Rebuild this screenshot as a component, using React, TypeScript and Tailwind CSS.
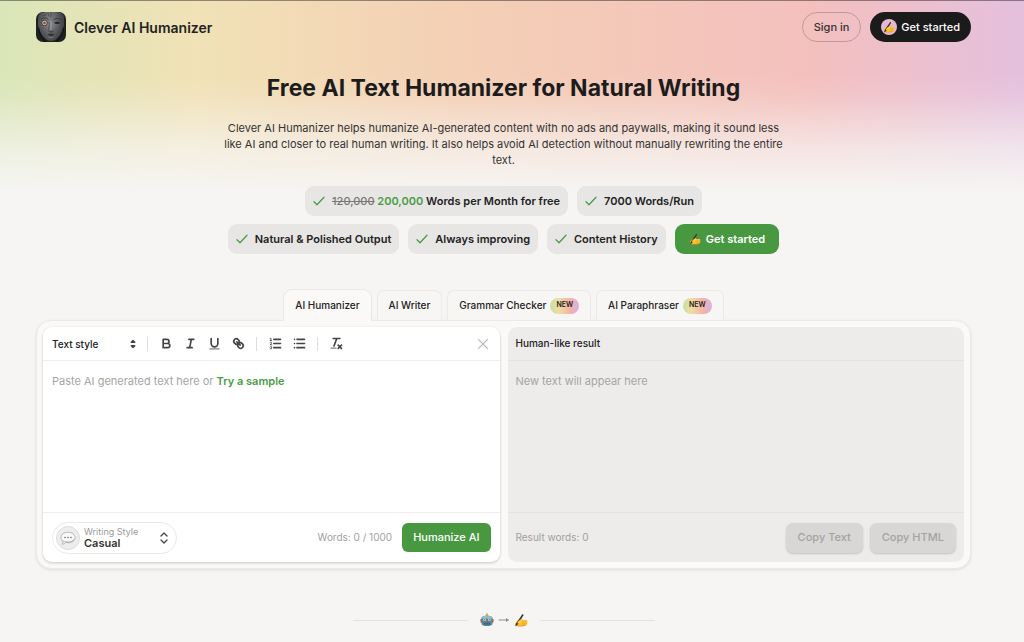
import React, { useState } from 'react';

interface IconProps {
  className?: string;
}

const WritingHand: React.FC<IconProps> = ({ className }) => (
  <svg viewBox="0 0 32 32" className={className} aria-hidden="true">
    <path d="M2.500 25c1.500-5 6-9.500 12-11.500 3-.8 5 .2 4.500 2.500h9c3 0 3.200 3.300.8 3.800 2.800.4 2.700 3.400.4 3.800 1.600 1 .9 3-1 3.200-.2 1.400-1.400 1.900-3 2.200-6.200 1.400-14 1.600-20 .3C3 28.700 2 27.500 2.500 25z" fill="#fdbf30" />
    <path d="M18 19.800h11M19 23.500h10M18 26.800h9" stroke="#e6981f" strokeWidth="0.900" fill="none" />
    <path d="M4 28.600c6 2 17 1.800 23-.8" stroke="#d9851c" strokeWidth="1.300" fill="none" />
    <path d="M2.500 30.500 5 23.500 18.500 3.500c1.200-1.500 4 .2 3 2.100L8 27z" fill="#3a3836" />
    <path d="M7.500 22.500c2.500-4 5.500-6.700 9-8 2.300-.6 3.200.6 2.500 2.200-1.500 3.700-5 6.300-10.500 7.500z" fill="#fecd45" />
  </svg>
);

const Robot: React.FC<IconProps> = ({ className }) => (
  <svg viewBox="0 0 32 32" className={className} aria-hidden="true">
    <circle cx="16" cy="3" r="2.500" fill="#f5a524" />
    <path d="M11.500 8c0-4 9-4 9 0z" fill="#e59b33" />
    <rect x="1" y="13" width="4" height="9" rx="2" fill="#c9544e" />
    <rect x="27" y="13" width="4" height="9" rx="2" fill="#c9544e" />
    <path d="M3.500 10c2-5 23-5 25 0v15c-1 6.500-24 6.500-25 0z" fill="#4f8c9e" />
    <path d="M4 10c2-4.500 22-4.500 24 0l-.5 2.500h-23z" fill="#8fc0cd" />
    <circle cx="10.500" cy="15.500" r="3" fill="#dfeaed" />
    <circle cx="21.500" cy="15.500" r="3" fill="#dfeaed" />
    <circle cx="10.500" cy="15.500" r="1.600" fill="#c2463e" />
    <circle cx="21.500" cy="15.500" r="1.600" fill="#c2463e" />
    <path d="m16 17 2 3.500h-4z" fill="#c74d45" />
    <rect x="9" y="22.500" width="14" height="4" rx="1.500" fill="#2f4954" />
    <path d="M12 23v3M16 23v3M20 23v3" stroke="#b9d0d6" strokeWidth="1" />
  </svg>
);

const SpeechBubble: React.FC<IconProps> = ({ className }) => (
  <svg viewBox="0 0 32 32" className={className} aria-hidden="true">
    <path d="M16 4.500c8.500 0 14 4.300 14 10.500s-5.500 10.500-14 10.500c-1.800 0-3.500-.2-5-.6-1.200 1.800-3.300 3.300-6.500 3.600 1.300-1.500 1.600-3.500 1.400-5.600C3.400 21 2 18.300 2 15 2 8.800 7.500 4.500 16 4.500z" fill="#f8f8f8" stroke="#b0b0b0" strokeWidth="1.800" />
    <path d="M5 21c3 3.500 19 5.500 24-3" stroke="#9a9a9a" strokeWidth="1.400" fill="none" />
    <circle cx="10" cy="15" r="1.500" fill="#666" />
    <circle cx="16" cy="15" r="1.500" fill="#666" />
    <circle cx="22" cy="15" r="1.500" fill="#666" />
  </svg>
);

const Logo: React.FC = () => (
  <svg viewBox="0 0 60 60" className="h-[30px] w-[30px] rounded-[7px]" aria-hidden="true">
    <defs>
      <linearGradient id="face" x1="0" y1="0" x2="0" y2="1">
        <stop offset="0" stopColor="#6d6e70" />
        <stop offset="0.45" stopColor="#85868a" />
        <stop offset="1" stopColor="#4a4b4d" />
      </linearGradient>
      <linearGradient id="shade" x1="0" y1="0" x2="1" y2="0">
        <stop offset="0" stopColor="#1b1c1e" stopOpacity="0.500" />
        <stop offset="0.400" stopColor="#1b1c1e" stopOpacity="0" />
        <stop offset="0.600" stopColor="#1b1c1e" stopOpacity="0.100" />
        <stop offset="1" stopColor="#1b1c1e" stopOpacity="0.650" />
      </linearGradient>
    </defs>
    <rect width="60" height="60" fill="#202123" />
    <path d="M6 5C14-3 46-3 54 5c3 10 2 24-2 34-4 9-13 19-22 19S12 48 8 39C4 29 3 15 6 5z" fill="url(#face)" />
    <path d="M6 5C14-3 46-3 54 5c3 10 2 24-2 34-4 9-13 19-22 19S12 48 8 39C4 29 3 15 6 5z" fill="url(#shade)" />
    <path d="M30 0v10M24 2l2 7M14 8l7-3" stroke="#38393b" strokeWidth="1.200" fill="none" />
    <path d="M26 20c1 7 0 12-2 17" stroke="#48494b" strokeWidth="1.600" fill="none" />
    <path d="M25 38c2 2.500 8 2.500 10 0" stroke="#333436" strokeWidth="2" fill="none" />
    <path d="M30 18v18" stroke="#a6a7aa" strokeWidth="2.500" strokeOpacity="0.700" fill="none" />
    <path d="M10 15c4-4 10-4 15 0M35 16c4-4 10-4 15 0" stroke="#2f3032" strokeWidth="1.600" fill="none" />
    <path d="M36 22c4-3.500 9-3.500 13 0-4 2.500-9 2.500-13 0z" fill="#242527" />
    <circle cx="17" cy="22" r="6" fill="#2b2929" />
    <circle cx="17" cy="22" r="4.800" fill="#d3aa98" />
    <circle cx="17" cy="22" r="2.400" fill="#7c5045" />
    <path d="M23 45c2.500-2 5-2.500 7-1 2-1.500 4.500-1 7 1-4 4.500-10 4.500-14 0z" fill="#343436" />
    <path d="M25 50c3 1.500 7 1.500 10 0" stroke="#828386" strokeWidth="1.500" fill="none" />
    <path d="M5 32c1 12 7 20 15 28M55 32c-1 12-7 20-15 28" stroke="#141517" strokeWidth="3" fill="none" />
  </svg>
);

const CheckIcon: React.FC = () => (
  <svg viewBox="0 0 12 10" className="h-[10px] w-3 shrink-0" fill="none" stroke="#4b9c46" strokeWidth="1.300" strokeLinecap="round" strokeLinejoin="round" aria-hidden="true">
    <path d="m1 5.800 3 3L11 1.300" />
  </svg>
);

const Chip: React.FC<{ children: React.ReactNode }> = ({ children }) => (
  <li className="flex h-[30px] items-center gap-[7px] rounded-[9px] bg-[#e7e6e4] px-2 text-[11px] font-semibold text-[#222]">
    <CheckIcon />
    <span>{children}</span>
  </li>
);

const tools = [
  { label: 'AI Humanizer', isNew: false },
  { label: 'AI Writer', isNew: false },
  { label: 'Grammar Checker', isNew: true },
  { label: 'AI Paraphraser', isNew: true },
];

interface ToolButtonProps {
  label: string;
  children: React.ReactNode;
}

const ToolButton: React.FC<ToolButtonProps> = ({ label, children }) => (
  <button type="button" aria-label={label} className="flex h-6 w-6 items-center justify-center">
    <svg viewBox="0 0 18 18" className="h-[15px] w-[15px]" fill="none" stroke="#444" strokeWidth="2" strokeLinecap="round" strokeLinejoin="round">
      {children}
    </svg>
  </button>
);

const Divider: React.FC = () => <span className="mx-[6px] h-[14px] w-px bg-[#dededd]" />;

const Header: React.FC = () => (
  <header className="flex items-center justify-between pt-[11px]">
    <a href="#" className="flex items-center gap-2 text-[14px] font-semibold text-[#222]">
      <Logo />
      Clever AI Humanizer
    </a>
    <nav className="flex items-center gap-[9px]">
      <a href="#" className="flex h-[30px] items-center rounded-full border border-black/20 px-[11px] text-[11px] font-medium text-[#333]">
        Sign in
      </a>
      <a href="#" className="flex h-[30px] items-center gap-1 rounded-full bg-[#1b1b1b] px-[11px] text-[11px] font-medium text-white">
        <span className="flex h-4 w-4 items-center justify-center rounded-full bg-[#e6b9d2]">
          <WritingHand className="h-3 w-3" />
        </span>
        Get started
      </a>
    </nav>
  </header>
);

const Hero: React.FC = () => (
  <section className="flex flex-col items-center text-center">
    <h1 className="mt-[30px] text-[23px] leading-8 font-bold text-[#1c1c1c]">
      Free AI Text Humanizer for Natural Writing
    </h1>
    <p className="mt-4 max-w-[562px] text-[11px] leading-4 text-[#333]">
      Clever AI Humanizer helps humanize AI-generated content with no ads and paywalls, making it sound less like AI and
      closer to real human writing. It also helps avoid AI detection without manually rewriting the entire text.
    </p>
    <ul className="mt-[18px] flex max-w-[562px] flex-wrap justify-center gap-x-[9px] gap-y-2">
      <Chip>
        <s className="font-medium text-[#777]">120,000</s> <span className="text-[#4b9c46]">200,000</span> Words per
        Month for free
      </Chip>
      <Chip>7000 Words/Run</Chip>
      <Chip>Natural &amp; Polished Output</Chip>
      <Chip>Always improving</Chip>
      <Chip>Content History</Chip>
      <li>
        <a href="#" className="flex h-[30px] items-center gap-[5px] rounded-[9px] bg-[#489841] px-[14px] text-[11px] font-semibold text-white">
          <WritingHand className="h-3 w-3" />
          Get started
        </a>
      </li>
    </ul>
  </section>
);

const EditorPanel: React.FC = () => {
  const [text, setText] = useState('');
  const words = text.split(/\s+/).filter(Boolean).length;

  return (
    <section className="flex flex-1 flex-col rounded-[9px] bg-white shadow-[0_1px_3px_rgba(0,0,0,0.2)]">
      <div className="flex h-[34px] items-center border-b border-[#eeeeed] px-[9px]">
        <div className="relative flex w-[89px] items-center">
          <select aria-label="Text style" className="w-full appearance-none text-[10px] leading-4 font-medium text-[#222]">
            <option>Text style</option>
          </select>
          <svg viewBox="0 0 18 18" className="pointer-events-none absolute right-0 h-4 w-4" fill="#444" stroke="#444" strokeWidth="1.500" strokeLinejoin="round">
            <path d="M7 11h4l-2 2zM7 7h4L9 5z" />
          </svg>
        </div>
        <Divider />
        <ToolButton label="Bold">
          <path d="M5 4h4.500a2.500 2.500 0 0 1 0 5H5zM5 9h5.500a2.500 2.500 0 0 1 0 5H5z" />
        </ToolButton>
        <ToolButton label="Italic">
          <path d="M7 4h6M5 14h6M8 14l2-10" />
        </ToolButton>
        <ToolButton label="Underline">
          <path d="M5 3v6a4 4 0 0 0 8 0V3" />
          <path d="M3.500 15.500h11" strokeWidth="1" />
        </ToolButton>
        <ToolButton label="Link">
          <path d="m7 7 4 4" />
          <path d="M8.900 4.577a3.476 3.476 0 0 1 .36 4.679A3.476 3.476 0 0 1 4.577 8.900C3.185 7.500 2.035 6.400 4.217 4.217S7.500 3.185 8.900 4.577z" />
          <path d="M13.423 9.100a3.476 3.476 0 0 0-4.679-.36 3.476 3.476 0 0 0 .36 4.679c1.392 1.392 2.500 2.542 4.679.36s1.032-3.279-.36-4.679z" />
        </ToolButton>
        <Divider />
        <ToolButton label="Numbered list">
          <path d="M7 4h8M7 9h8M7 14h8" />
          <path d="m2.500 3 1-.5v3M2.500 5.500h2M4.500 10.500h-2c0-.234 1.850-1.076 1.850-2.234a.959.959 0 0 0-1.850-.11M2.500 14.846a.959.959 0 0 0 1.850-.109.700.700 0 0 0-.6-.737.688.688 0 0 0 .6-.736.959.959 0 0 0-1.850-.109" strokeWidth="1" />
        </ToolButton>
        <ToolButton label="Bullet list">
          <path d="M6 4h9M6 9h9M6 14h9M3 4h.01M3 9h.01M3 14h.01" />
        </ToolButton>
        <Divider />
        <ToolButton label="Clear formatting">
          <path d="M5 3h8M6 12 9.350 3M11 11l4 4M15 11l-4 4" />
          <path d="M2.500 14.500h6" strokeWidth="1" />
        </ToolButton>
        <button type="button" aria-label="Clear text" onClick={() => setText('')} className="ml-auto flex h-4 w-4 items-center justify-center">
          <svg viewBox="0 0 10 10" className="h-[10px] w-[10px]" fill="none" stroke="#b5b5b5" strokeWidth="1.200" strokeLinecap="round">
            <path d="m.6.6 8.800 8.800M9.400.6.6 9.400" />
          </svg>
        </button>
      </div>

      <div className="relative h-[151px] text-[11px] leading-4">
        <textarea
          aria-label="AI generated text"
          value={text}
          onChange={(e) => setText(e.target.value)}
          className="h-full w-full resize-none px-[9px] py-3 text-[#333] outline-none"
        />
        {!text && (
          <p className="pointer-events-none absolute top-3 left-[9px] text-[#a5a5a5]">
            Paste AI generated text here or{' '}
            <button
              type="button"
              onClick={() => setText('Artificial intelligence has changed the way people write.')}
              className="pointer-events-auto font-semibold text-[#4b9c46]"
            >
              Try a sample
            </button>
          </p>
        )}
      </div>

      <div className="flex h-[50px] items-center border-t border-[#eeeeed] px-[9px]">
        <div className="relative flex h-8 w-[125px] items-center gap-1 rounded-full border border-[#e9e9e8] px-[3px]">
          <span className="flex h-6 w-6 items-center justify-center rounded-full border border-[#dcdcdc] bg-[#ededed]">
            <SpeechBubble className="h-4 w-4" />
          </span>
          <div className="flex flex-1 flex-col">
            <label htmlFor="writing-style" className="text-[9px] leading-[11px] text-[#9a9a9a]">
              Writing Style
            </label>
            <select id="writing-style" className="appearance-none text-[11px] leading-[13px] font-semibold text-[#333]">
              <option>Casual</option>
            </select>
          </div>
          <svg viewBox="0 0 8 12" className="pointer-events-none absolute right-2 h-3 w-2" fill="none" stroke="#444" strokeWidth="1.300" strokeLinecap="round" strokeLinejoin="round">
            <path d="m1 4 3-3 3 3M1 8l3 3 3-3" />
          </svg>
        </div>
        <span className="ml-auto text-[10px] text-[#9f9f9f]">Words: {words} / 1000</span>
        <button type="button" className="ml-[10px] h-[29px] rounded-[6px] bg-[#489841] px-[11px] text-[11px] font-medium text-white">
          Humanize AI
        </button>
      </div>
    </section>
  );
};

const ResultPanel: React.FC = () => (
  <section className="flex flex-1 flex-col rounded-[9px] bg-[#edecea]">
    <h2 className="flex h-[34px] items-center border-b border-[#e4e3e1] px-2 text-[10px] font-medium text-[#222]">
      Human-like result
    </h2>
    <p className="h-[151px] px-2 py-3 text-[11px] leading-4 text-[#a5a5a5]">New text will appear here</p>
    <div className="flex h-[50px] items-center gap-[7px] border-t border-[#e4e3e1] px-2 text-[#9f9f9f]">
      <span className="mr-auto text-[10px]">Result words: 0</span>
      <button type="button" disabled className="h-[30px] rounded-[7px] bg-[#d8d7d5] px-3 text-[11px] font-medium text-[#a3a3a2] shadow-[0_1px_2px_rgba(0,0,0,0.18)]">
        Copy Text
      </button>
      <button type="button" disabled className="h-[30px] rounded-[7px] bg-[#d8d7d5] px-3 text-[11px] font-medium text-[#a3a3a2] shadow-[0_1px_2px_rgba(0,0,0,0.18)]">
        Copy HTML
      </button>
    </div>
  </section>
);

export default function App() {
  const [activeTool, setActiveTool] = useState('AI Humanizer');

  return (
    <div className="min-h-screen bg-[#f6f5f3] bg-[linear-gradient(to_bottom,rgba(246,245,243,0)_75px,rgba(246,245,243,0.1)_95px,rgba(246,245,243,0.7)_150px,rgba(246,245,243,1)_194px),linear-gradient(to_right,#dae6b8_0%,#f1e2b7_19%,#f4d0b5_44%,#f4c0be_79%,#e4c0de_100%)] bg-[length:100%_194px] bg-no-repeat font-['Inter','Liberation_Sans',sans-serif]">
      <div className="h-px bg-black/40" />
      <div className="pr-[53px] pl-9">
        <Header />
        <Hero />

        <main className="mt-[35px]">
          <div role="tablist" className="flex items-end justify-center gap-[5px]">
            {tools.map((tool) => (
              <button
                key={tool.label}
                type="button"
                role="tab"
                aria-selected={activeTool === tool.label}
                onClick={() => setActiveTool(tool.label)}
                className={`flex items-center gap-1 border border-b-0 px-[11px] text-[10px] font-medium text-[#222] ${
                  activeTool === tool.label
                    ? 'relative z-10 -mb-px h-8 rounded-t-[9px] border-[#e9e8e6] bg-[#faf9f7]'
                    : 'h-[30px] rounded-t-[7px] border-[#eceae8] bg-[#f7f6f4]'
                }`}
              >
                {tool.label}
                {tool.isNew && (
                  <span className="flex h-4 items-center rounded-full bg-[linear-gradient(to_right,#c4e2a8,#f0dca0_30%,#f3b3a8_70%,#d9b0e4)] px-[6px] text-[7px] font-semibold">
                    NEW
                  </span>
                )}
              </button>
            ))}
          </div>
          <div className="flex gap-2 rounded-[15px] border border-[#ebeae8] bg-[#faf9f7] p-[6px] shadow-[0_1px_3px_rgba(0,0,0,0.1)]">
            <EditorPanel />
            <ResultPanel />
          </div>
        </main>

        <div className="mx-auto mt-11 flex w-[302px] items-center gap-3">
          <span className="h-px flex-1 bg-[#e2e1df]" />
          <span className="flex items-center gap-1">
            <Robot className="h-[14px] w-[14px]" />
            <svg viewBox="0 0 12 8" className="h-2 w-3" fill="none" stroke="#8d8d8d" strokeWidth="1" strokeLinecap="round" aria-hidden="true">
              <path d="M1 4h9" />
              <path d="M8 2v4l3-2z" fill="#8d8d8d" stroke="none" />
            </svg>
            <WritingHand className="h-[14px] w-[14px]" />
          </span>
          <span className="h-px flex-1 bg-[#e2e1df]" />
        </div>
      </div>
    </div>
  );
}
